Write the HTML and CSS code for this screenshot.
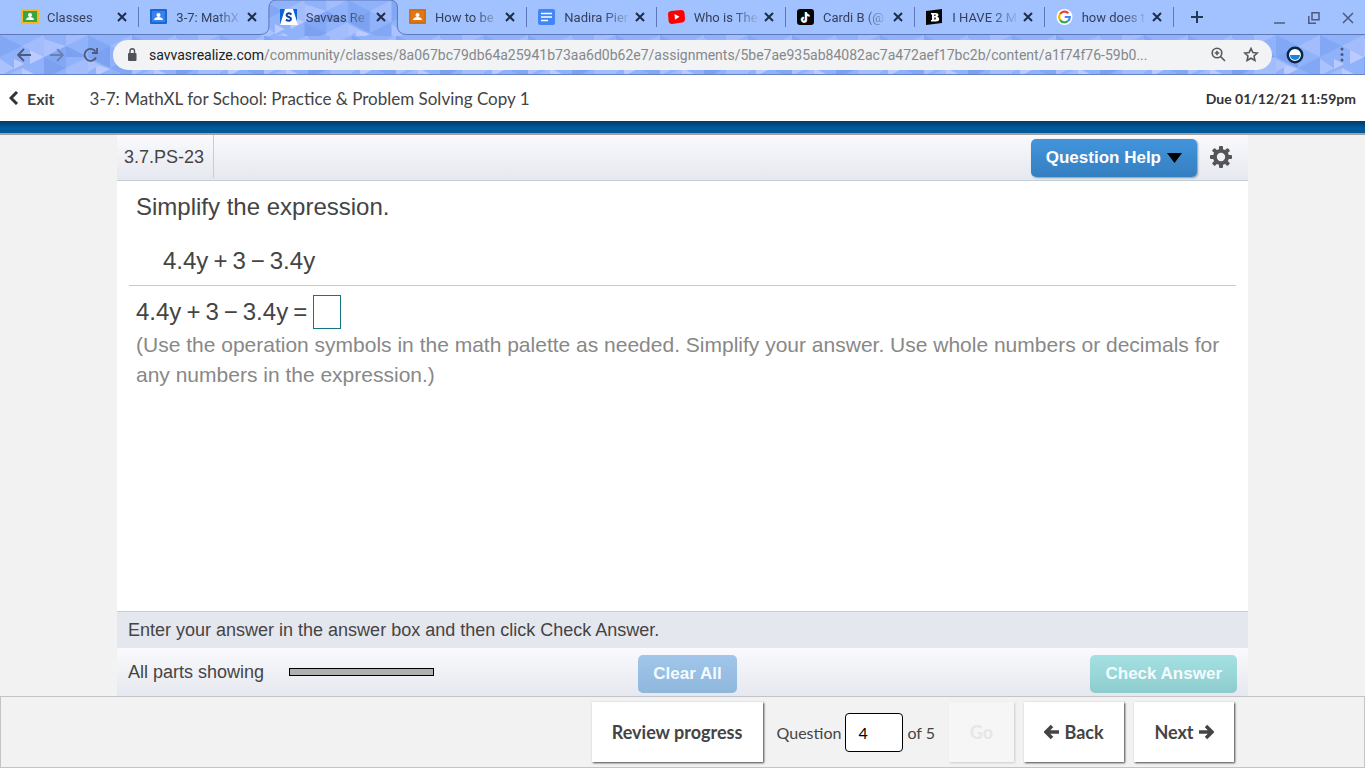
FILE: index.html
```html
<!DOCTYPE html>
<html lang="en">
<head>
<meta charset="utf-8">
<title>Savvas Realize</title>
<link rel="stylesheet" href="styles.css">
</head>
<body>
<div class="browser">
  <div class="tabstrip">
    <div class="tabs">
      <div class="tab sep">
        <svg class="favicon" viewBox="0 0 18 16"><rect width="18" height="15" rx="1" fill="#f5ba15"/><rect x="2" y="2" width="14" height="11" fill="#39a346"/><circle cx="9" cy="6" r="2" fill="#fff"/><path d="M5 11c0-4 8-4 8 0z" fill="#fff"/></svg>
        <span class="tab-title">Classes</span><button class="close" aria-label="Close tab"><svg viewBox="0 0 10 10"><path d="M1 1l8 8M9 1L1 9"/></svg></button>
      </div>
      <div class="tab">
        <svg class="favicon" viewBox="0 0 18 16"><rect width="17" height="15" rx="1" fill="#1967d2"/><rect x="2" y="2" width="13" height="11" fill="#3b7fe8"/><circle cx="8.500" cy="6" r="2" fill="#fff"/><path d="M4 11c0-4 9-4 9 0z" fill="#fff"/></svg>
        <span class="tab-title">3-7: MathX</span><button class="close" aria-label="Close tab"><svg viewBox="0 0 10 10"><path d="M1 1l8 8M9 1L1 9"/></svg></button>
      </div>
      <div class="tab active">
        <svg class="tab-shape" viewBox="0 0 148 36" preserveAspectRatio="none"><path d="M0 36V34Q8 34 8 26V8Q8 0 16 0H130Q138 0 138 8V26Q138 34 147 34V36z" fill="url(#triangles)"/><path d="M0 34.500Q8 34 8 26V8Q8 0 16 0H130Q138 0 138 8V26Q138 34 147 34.500" fill="none" stroke="#5c78b8"/></svg>
        <svg class="favicon" viewBox="0 0 18 16"><rect width="17" height="16" fill="#0b63d8"/><path d="M0 16L5 0h8l5 16z" fill="#fff"/><path d="M11.500 5.500C8.500 3 5.500 5 7 7c1 1.300 4 .8 4 3 0 2-3 2.200-5 .6" fill="none" stroke="#0b3fa0" stroke-width="2"/></svg>
        <span class="tab-title">Savvas Re</span><button class="close" aria-label="Close tab"><svg viewBox="0 0 10 10"><path d="M1 1l8 8M9 1L1 9"/></svg></button>
      </div>
      <div class="tab sep">
        <svg class="favicon" viewBox="0 0 18 16"><rect width="17" height="15" rx="1" fill="#d56e0c"/><rect x="2" y="2" width="13" height="11" fill="#e07714"/><circle cx="8.500" cy="6" r="2" fill="#fff"/><path d="M4 11c0-4 9-4 9 0z" fill="#fff"/></svg>
        <span class="tab-title">How to be</span><button class="close" aria-label="Close tab"><svg viewBox="0 0 10 10"><path d="M1 1l8 8M9 1L1 9"/></svg></button>
      </div>
      <div class="tab sep">
        <svg class="favicon" viewBox="0 0 18 16"><rect width="17" height="16" rx="2" fill="#4285f4"/><path d="M3 4.500h11M3 8h11M3 11.500h7" stroke="#fff" stroke-width="1.600"/></svg>
        <span class="tab-title">Nadira Pier</span><button class="close" aria-label="Close tab"><svg viewBox="0 0 10 10"><path d="M1 1l8 8M9 1L1 9"/></svg></button>
      </div>
      <div class="tab sep">
        <svg class="favicon" viewBox="0 0 18 16"><path d="M0 5Q0 2.500 3 2L13 1Q16 1 16.500 4L17 10Q17 13 14 13.500L4 15Q1 15 .6 12z" fill="#f00"/><path d="M6.500 5l5 2.700-4.500 3z" fill="#fff"/></svg>
        <span class="tab-title">Who is The</span><button class="close" aria-label="Close tab"><svg viewBox="0 0 10 10"><path d="M1 1l8 8M9 1L1 9"/></svg></button>
      </div>
      <div class="tab sep">
        <svg class="favicon" viewBox="0 0 18 16"><rect width="17" height="16" rx="3" fill="#050505"/><g fill="none" stroke-width="1.800"><path d="M8.500 3v7.500a2 2 0 1 1-2-2M8.500 4q1 2.500 3.500 2.500" stroke="#25f4ee"/><path d="M9.500 3.500V11a2 2 0 1 1-2-2M9.500 4.500q1 2.500 3.500 2.500" stroke="#fe2c55"/><path d="M9 3v7.800a2 2 0 1 1-2-2M9 4q1 2.700 3.500 2.700" stroke="#fff"/></g></svg>
        <span class="tab-title">Cardi B (@</span><button class="close" aria-label="Close tab"><svg viewBox="0 0 10 10"><path d="M1 1l8 8M9 1L1 9"/></svg></button>
      </div>
      <div class="tab sep">
        <svg class="favicon" viewBox="0 0 18 16"><path d="M0 2L16 0V14L0 16z" fill="#050505"/><path d="M5 4h4.500q3 0 3 2 0 1.300-1.300 1.800 2 .4 2 2.200 0 2.500-3.200 2.500H5V11h1V5.500H5zm3.300 1.500V7h1.200V5.500zm0 3v2h1.400v-2z" fill="#fff" fill-rule="evenodd"/></svg>
        <span class="tab-title">I HAVE 2 M</span><button class="close" aria-label="Close tab"><svg viewBox="0 0 10 10"><path d="M1 1l8 8M9 1L1 9"/></svg></button>
      </div>
      <div class="tab sep">
        <svg class="favicon" viewBox="0 0 18 16"><circle cx="8.500" cy="8" r="8" fill="#fff"/><g fill="none" stroke-width="2.200"><path d="M12.300 4.200A5.300 5.300 0 0 0 4 5.200" stroke="#ea4335"/><path d="M4 5.200A5.300 5.300 0 0 0 4 10.800" stroke="#fbbc05"/><path d="M4 10.800A5.300 5.300 0 0 0 12 12" stroke="#34a853"/><path d="M12 12A5 5 0 0 0 13.800 8H8.800" stroke="#4285f4"/></g></svg>
        <span class="tab-title">how does t</span><button class="close" aria-label="Close tab"><svg viewBox="0 0 10 10"><path d="M1 1l8 8M9 1L1 9"/></svg></button>
      </div>
    </div>
    <button class="new-tab" aria-label="New tab"><svg width="12" height="12" viewBox="0 0 12 12"><path d="M6 0v12M0 6h12" stroke="#283756" stroke-width="2"/></svg></button>
    <div class="window-controls">
      <button aria-label="Minimize"><svg viewBox="0 0 12 12"><path d="M0 11h11"/></svg></button>
      <button aria-label="Restore"><svg viewBox="0 0 12 12"><path d="M4 .8h7v7H4zM.8 4v7.200H8"/></svg></button>
      <button aria-label="Close"><svg viewBox="0 0 12 12"><path d="M1 1l10 10M11 1L1 11"/></svg></button>
    </div>
  </div>
  <div class="toolbar">
    <svg class="toolbar-art" aria-hidden="true">
      <defs><pattern id="triangles" width="132" height="44" patternUnits="userSpaceOnUse">
        <rect width="132" height="44" fill="#8fb2fa"/>
        <path d="M0 0l22 11-22 11zM44 22l22-11v22zM88 0l22 11-22 11zM110 33l22-11v22z" fill="#82a8f5"/>
        <path d="M22 11L44 0v22zM66 33l22-11v22H66zM0 44l22-11v11zM66 0v11L88 0zM110 11l22-11v22z" fill="#a3bcfb"/>
        <path d="M22 33l14 7-14 4zM30 15l14 7-14 7zM96 29l14 5-14 7zM14 24l10 5-10 5z" fill="#bccbff"/>
        <path d="M44 4l22 7-22 11zM88 24l12 6-12 7zM0 24l14 9-14 8z" fill="#abc2ff"/>
        <path d="M44 22l22 11-22 11zM66 11l22 11H66zM110 11v22L88 22z" fill="#7ba1f0"/>
      </pattern></defs>
      <rect width="100%" height="100%" fill="url(#triangles)"/>
    </svg>
    <button class="nav" aria-label="Back"><svg width="14" height="14" viewBox="0 0 14 14"><path d="M14 7H1M7 1L1 7l6 6"/></svg></button>
    <button class="nav faded" aria-label="Forward"><svg width="14" height="14" viewBox="0 0 14 14"><path d="M0 7h13M7 1l6 6-6 6"/></svg></button>
    <button class="nav" aria-label="Reload"><svg width="16" height="14" viewBox="0 0 16 14"><path d="M12.500 3.500A6 6 0 1 0 13 9.500M14 0v5H9"/></svg></button>
    <div class="omnibox">
      <svg width="10" height="13" viewBox="0 0 10 13"><rect x="1" y="5" width="8.500" height="8" rx="1" fill="#4f5357"/><path d="M3 5V3a2.200 2.200 0 0 1 4.500 0v2" fill="none" stroke="#4f5357" stroke-width="1.400"/></svg>
      <div class="url"><b>savvasrealize.com</b>/community/classes/8a067bc79db64a25941b73aa6d0b62e7/assignments/5be7ae935ab84082ac7a472aef17bc2b/content/a1f74f76-59b0...</div>
      <button aria-label="Zoom"><svg width="15" height="15" viewBox="0 0 15 15"><circle cx="6" cy="6" r="4.800"/><path d="M9.500 9.500l4.500 4.500M3.700 6h4.600M6 3.700v4.600"/></svg></button>
      <button aria-label="Bookmark"><svg width="16" height="15" viewBox="0 0 16 15"><path d="M8 1.500l1.900 4 4.400.5-3.300 3 .9 4.400L8 11.200l-3.900 2.200.9-4.400-3.300-3 4.400-.5z"/></svg></button>
    </div>
    <svg class="extension" width="18" height="18" viewBox="0 0 18 18"><circle cx="9" cy="9" r="7.200" fill="#fff" stroke="#07284e" stroke-width="2.500"/><path d="M4 9h10a5 5 0 0 1-10 0z" fill="#1786e0"/></svg>
    <button class="menu" aria-label="Menu"><svg width="4" height="15" viewBox="0 0 4 15"><circle cx="2" cy="2" r="1.500"/><circle cx="2" cy="7.500" r="1.500"/><circle cx="2" cy="13" r="1.500"/></svg></button>
  </div>
</div>

<header class="site-header">
  <a class="exit" href="#"><svg width="10" height="14" viewBox="0 0 10 14"><path d="M8 1L2 7l6 6" fill="none" stroke="#333" stroke-width="3"/></svg>Exit</a>
  <h1>3-7: MathXL for School: Practice &amp; Problem Solving Copy 1</h1>
  <span class="due">Due 01/12/21 11:59pm</span>
</header>
<div class="blue-band"></div>

<main class="player">
  <div class="question-bar">
    <span class="exercise">3.7.PS-23</span>
    <button class="action help">Question Help<svg width="15" height="10" viewBox="0 0 15 10"><path d="M0 0h15L7.500 10z" fill="#000"/></svg></button>
    <button class="gear" aria-label="Settings"><svg width="22" height="22" viewBox="-11 -11 22 22"><g fill="#555"><rect x="-2" y="-11" width="4" height="22" rx="1"/><rect x="-2" y="-11" width="4" height="22" rx="1" transform="rotate(45)"/><rect x="-2" y="-11" width="4" height="22" rx="1" transform="rotate(90)"/><rect x="-2" y="-11" width="4" height="22" rx="1" transform="rotate(135)"/><circle r="8"/></g><circle r="4.200" fill="#f0f1f6"/></svg></button>
  </div>
  <section class="question">
    <p class="prompt">Simplify the expression.</p>
    <p class="math expression">4.4y<i>+</i>3<i>−</i>3.4y</p>
    <hr>
    <div class="math answer"><label for="answer">4.4y<i>+</i>3<i>−</i>3.4y<i>=</i></label><input id="answer" type="text"></div>
    <p class="note">(Use the operation symbols in the math palette as needed. Simplify your answer. Use whole numbers or decimals for any numbers in the expression.)</p>
  </section>
  <p class="hint">Enter your answer in the answer box and then click Check Answer.</p>
  <div class="part-bar">
    <div class="parts">All parts showing<span class="meter"></span></div>
    <button class="action clear">Clear All</button>
    <button class="action check">Check Answer</button>
  </div>
</main>

<footer class="pager">
  <div class="pager-inner">
    <button class="page-button review">Review progress</button>
    <div class="jump"><label for="number">Question</label><input id="number" type="text" value="4"><span>of 5</span></div>
    <button class="page-button go" disabled>Go</button>
    <button class="page-button step"><svg width="16" height="16" viewBox="0 0 16 16"><path d="M15 8H3M8 2L2 8l6 6"/></svg>Back</button>
    <button class="page-button step">Next<svg width="16" height="16" viewBox="0 0 16 16"><path d="M1 8h12M8 2l6 6-6 6"/></svg></button>
  </div>
</footer>
</body>
</html>
```
FILE: styles.css
```css
* { box-sizing: border-box; }
body {
  margin: 0;
  min-height: 100vh;
  display: flex;
  flex-direction: column;
  background: #f2f2f2;
  color: #444;
  font-family: "Liberation Sans", Arial, sans-serif;
}
button { border: 0; padding: 0; background: none; font: inherit; color: inherit; }
p, h1 { margin: 0; font-weight: normal; }
svg { flex: none; display: block; }

/* Browser frame */
.browser { font-family: Roboto, sans-serif; border-bottom: 1px solid #6482c8; }
.tabstrip {
  display: flex;
  align-items: center;
  height: 35px;
  padding-left: 10px;
  background: #a1c2ff;
  border-bottom: 1px solid #5c78b8;
}
.tabs { flex: 0 1 1164px; display: flex; min-width: 0; }
.tab {
  position: relative;
  flex: 1 1 0;
  min-width: 0;
  height: 34px;
  display: flex;
  align-items: center;
  padding: 0 12px 0 11px;
}
.tab.sep::after {
  content: "";
  position: absolute;
  right: 0;
  top: 7px;
  width: 1px;
  height: 20px;
  background: #5c78b8;
}
.favicon { width: 18px; height: 16px; position: relative; }
.tab-title {
  position: relative;
  flex: 1;
  min-width: 0;
  margin: 0 4px 0 8px;
  white-space: nowrap;
  font-size: 13px;
  color: #35415c;
  mask-image: linear-gradient(to right, #000 60%, transparent 100%);
}
.close { position: relative; }
.close svg { width: 10px; height: 10px; stroke: #1f2c48; stroke-width: 2; }
.tab-shape { position: absolute; left: -8px; top: 0; width: calc(100% + 17px); height: 36px; z-index: 0; }
.active { z-index: 1; }
.new-tab { margin-left: 17px; }
.window-controls { margin-left: auto; display: flex; gap: 22px; padding: 2px 11px 0 0; }
.window-controls svg { width: 12px; height: 12px; fill: none; stroke: #4b5b80; stroke-width: 1.500; }

.toolbar { position: relative; display: flex; align-items: center; height: 39px; padding: 0 21px 0 17px; }
.toolbar-art { position: absolute; inset: 0; width: 100%; height: 100%; }
.toolbar > :not(.toolbar-art) { position: relative; }
.nav { margin-right: 19px; }
.nav:nth-of-type(3) { margin-right: 14px; }
.nav svg { fill: none; stroke: #4d5a78; stroke-width: 1.800; }
.nav.faded { opacity: 0.500; }
.omnibox {
  flex: 1;
  min-width: 0;
  display: flex;
  align-items: center;
  height: 30px;
  padding: 0 13px 0 14px;
  border-radius: 15px;
  background: #f1f3f4;
}
.url {
  flex: 1;
  min-width: 0;
  margin: 0 12px;
  overflow: hidden;
  white-space: nowrap;
  font-size: 14px;
  color: #85888c;
}
.url b { font-weight: normal; color: #202124; }
.omnibox button { margin-right: 17px; }
.omnibox button:last-child { margin-right: 0; }
.omnibox button svg { fill: none; stroke: #55585c; stroke-width: 1.600; }
.extension { margin: 0 36px 0 14px; }
.menu svg { fill: #4d5a78; }

/* Assignment header */
.site-header {
  display: flex;
  align-items: center;
  height: 46px;
  padding: 0 9px;
  background: #fff;
  font-family: Lato, sans-serif;
}
.exit { display: flex; align-items: center; gap: 8px; margin-right: 35px; color: #444; font-weight: bold; font-size: 16px; text-decoration: none; }
.site-header h1 { font-size: 17px; }
.due { margin-left: auto; font-size: 14px; font-weight: bold; color: #333; }
.blue-band {
  height: 14px;
  background: linear-gradient(#003b66, #005a9c 50%, #005a9c 85%, #a8a09c 86%);
}

/* Exercise player */
.player { flex: 1; display: flex; flex-direction: column; margin: 0 117px; background: #fff; }
.question-bar {
  display: flex;
  align-items: center;
  height: 46px;
  padding-right: 16px;
  background: linear-gradient(#fafafd, #e5e8ef);
  border-bottom: 1px solid #c5ced8;
}
.exercise {
  align-self: flex-start;
  height: 43px;
  padding: 0 9px 0 7px;
  border-right: 1px solid #c8ccd4;
  font-size: 18px;
  line-height: 44px;
}
.action {
  height: 38px;
  padding: 0 15px;
  border-radius: 5px;
  color: #fff;
  font-size: 17px;
  font-weight: bold;
}
.help {
  display: flex;
  align-items: center;
  gap: 6px;
  margin: 0 13px 0 auto;
  background: linear-gradient(#4295dc, #347fc0);
  box-shadow: 1px 1px 2px #8899aa;
}
.gear { margin-bottom: 2px; }
.question { flex: 1; padding: 12px 12px 0; font-size: 24px; }
.prompt { padding-left: 7px; line-height: 28px; }
.math i { font-style: normal; margin: 0 5px; }
.expression { padding: 26px 34px 10px; line-height: 28px; }
.question hr { margin: 0 0 9px; border: 0; border-top: 1px solid #c4cbcb; }
.answer { display: flex; align-items: center; padding-left: 7px; line-height: 26px; }
.answer input { width: 28px; height: 34px; margin-left: 1px; padding: 0 4px; border: 1px solid #147482; font: inherit; }
.note { padding: 1px 7px 0; font-size: 21px; line-height: 30px; color: #888; }
.hint {
  height: 37px;
  padding: 0 11px;
  border-top: 1px solid #c5ced8;
  background: #e4e7ee;
  font-size: 18px;
  line-height: 36px;
}
.part-bar {
  display: grid;
  grid-template-columns: 1fr auto 1fr;
  align-items: center;
  height: 48px;
  padding: 4px 11px 0;
  background: linear-gradient(#fafafd, #e5e8ef);
}
.parts { display: flex; align-items: center; gap: 25px; margin-bottom: 4px; font-size: 18px; }
.meter { width: 145px; height: 8px; border: 1px solid #000; background: #b0b0b0; }
.clear { margin-left: 10px; background: linear-gradient(#a1c6ea, #8fb7dc); }
.check { justify-self: end; background: linear-gradient(#a5e1e2, #8dcccd); }
.clear, .check { color: #f3fbff; }

/* Pager */
.pager { border: 1px solid #c4c4c8; font-family: Lato, sans-serif; }
.pager-inner { display: flex; justify-content: flex-end; align-items: center; gap: 10px; height: 70px; padding-right: 130px; }
.page-button {
  display: flex;
  align-items: center;
  justify-content: center;
  gap: 4px;
  height: 60px;
  background: #fff;
  color: #444;
  font-size: 18px;
  font-weight: bold;
  box-shadow: 1px 1px 2px #444;
}
.review { width: 171px; margin-right: 4px; }
.jump { display: flex; align-items: center; gap: 4px; font-size: 16px; }
.jump input {
  width: 58px;
  height: 39px;
  padding: 0 12px;
  border: 1px solid #000;
  border-radius: 4px;
  background: #fff;
  color: #000;
  font: 16px Lato, sans-serif;
}
.go { width: 65px; margin-left: 4px; background: #f6f6f6; color: #e6e6e6; box-shadow: 1px 1px 2px #ccc; }
.step { width: 100px; }
.page-button svg { fill: none; stroke: #444; stroke-width: 3.500; }
```
